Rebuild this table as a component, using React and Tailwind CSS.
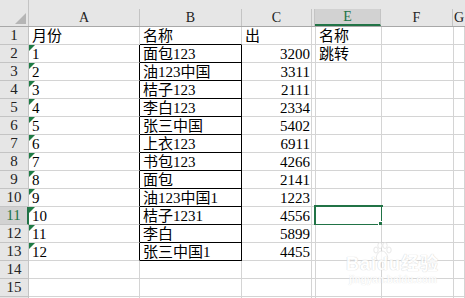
import React from "react";

// column widths include the 1px right gridline
const cols = [
  { id: "A", w: "w-[111px]" },
  { id: "B", w: "w-[102px]" },
  { id: "C", w: "w-[70px]" },
  { id: "D", w: "w-[3px]", hidden: true },
  { id: "E", w: "w-[66px]" },
  { id: "F", w: "w-[72px]" },
  { id: "G", w: "flex-1" },
];

const data = [
  ["月份", "名称", "出", "", "名称"],
  ["1", "面包123", "3200", "", "跳转"],
  ["2", "油123中国", "3311"],
  ["3", "桔子123", "2111"],
  ["4", "李白123", "2334"],
  ["5", "张三中国", "5402"],
  ["6", "上衣123", "6911"],
  ["7", "书包123", "4266"],
  ["8", "面包", "2141"],
  ["9", "油123中国1", "1223"],
  ["10", "桔子1231", "4556"],
  ["11", "李白", "5899"],
  ["12", "张三中国1", "4455"],
  [],
  [],
];

const ACTIVE_ROW = 11;
const ACTIVE_COL = "E";

function TextFlag() {
  return (
    <svg className="absolute left-0 top-0" width="6" height="6" viewBox="0 0 6 6">
      <polygon points="0,0 6,0 0,6" fill="#1e7b45" />
    </svg>
  );
}

function HeaderRow() {
  return (
    <div className="flex h-[27px] border-b border-[#a8a8a8] bg-[#e6e6e6]">
      <div className="relative w-[29px] shrink-0 border-r border-[#c4c4c4]">
        <svg className="absolute left-[15px] top-[13px]" width="11" height="11" viewBox="0 0 11 11">
          <polygon points="11,0 11,11 0,11" fill="#b5b5b5" />
        </svg>
      </div>
      {cols.map((c) => {
        const on = c.id === ACTIVE_COL;
        return (
          <div key={c.id} className={`${c.w} shrink-0 pt-[9px]`}>
            <div
              className={`flex h-[17px] items-center justify-center border-r text-[14px] leading-none ${
                on
                  ? "border-b-2 border-r-[#c4c4c4] border-b-[#217346] bg-[#d2d2d2] text-[#217346]"
                  : "border-r-[#c4c4c4] text-[#222]"
              } ${c.id === "G" ? "border-r-0" : ""}`}
            >
              {c.hidden ? "" : c.id}
            </div>
          </div>
        );
      })}
    </div>
  );
}

function BodyRow({ n, cells, label = true }) {
  const active = n === ACTIVE_ROW;
  const boxed = n >= 2 && n <= 13;
  return (
    <div className="flex h-[18px]">
      <div
        className={`w-[29px] shrink-0 border-b text-center text-[15px] leading-[17px] ${
          active
            ? "border-r-2 border-r-[#217346] border-b-[#c4c4c4] bg-[#d2d2d2] text-[#217346]"
            : "border-r border-r-[#c4c4c4] border-b-[#c4c4c4] bg-[#e6e6e6] text-[#222]"
        }`}
      >
        {label ? n : ""}
      </div>
      {cols.map((c, i) => {
        const v = cells[i] || "";
        const rightBlack = (c.id === "A" && boxed) || (c.id === "B" && boxed);
        const bottomBlack = c.id === "B" && n >= 1 && n <= 13;
        const isActive = active && c.id === ACTIVE_COL;
        return (
          <div
            key={c.id}
            className={`relative h-[18px] shrink-0 border-r border-b bg-white text-[15px] leading-[18px] whitespace-nowrap text-black ${c.w} ${
              rightBlack ? "border-r-black" : "border-r-[#d4d4d4]"
            } ${bottomBlack ? "border-b-black" : "border-b-[#d4d4d4]"} ${
              c.id === "C" && n > 1 ? "pr-[1px] text-right" : "pl-[3px]"
            }`}
          >
            {c.id === "A" && n >= 2 && n <= 13 && <TextFlag />}
            {v}
            {isActive && (
              <>
                <div className="absolute -left-[2px] -top-[2px] h-[21px] w-[69px] border-2 border-[#217346]" />
                <div className="absolute left-[62px] top-[14px] h-[7px] w-[7px] border border-white bg-[#217346]" />
              </>
            )}
          </div>
        );
      })}
    </div>
  );
}

function Watermark() {
  return (
    <div className="pointer-events-none absolute left-[344px] top-[242px] w-[100px] text-white opacity-80">
      <svg className="absolute left-[28px] top-0" width="20" height="20" viewBox="0 0 20 20">
        <g fill="#fff" stroke="#dcdcdc" strokeWidth="0.8">
          <ellipse cx="4" cy="8" rx="2.2" ry="3" />
          <ellipse cx="8" cy="3.5" rx="2.2" ry="3" />
          <ellipse cx="13" cy="3.5" rx="2.2" ry="3" />
          <ellipse cx="17" cy="8" rx="2.2" ry="3" />
          <path d="M10 9c-4 0-7 6-5 9 2 2 8 2 10 0 2-3-1-9-5-9z" />
        </g>
      </svg>
      <div className="absolute left-[2px] top-[13px] font-['Liberation_Sans','Noto_Sans_CJK_SC',sans-serif] text-[18px] font-bold leading-none tracking-[1px] [text-shadow:0_0_1px_#cfcfcf,0_0_1px_#cfcfcf]">
        Baidu经验
      </div>
      <div className="absolute left-[5px] top-[33px] font-['Liberation_Sans',sans-serif] text-[10px] font-bold leading-none [text-shadow:0_0_1px_#d2d2d2]">
        jingyan.baidu.com
      </div>
    </div>
  );
}

export default function App() {
  return (
    <div className="relative h-[298px] w-[465px] overflow-hidden bg-white font-['Liberation_Serif','Noto_Sans_CJK_SC',serif]">
      <HeaderRow />
      {data.map((cells, i) => (
        <BodyRow key={i} n={i + 1} cells={cells} />
      ))}
      <BodyRow n={16} cells={[]} label={false} />
      <Watermark />
    </div>
  );
}
